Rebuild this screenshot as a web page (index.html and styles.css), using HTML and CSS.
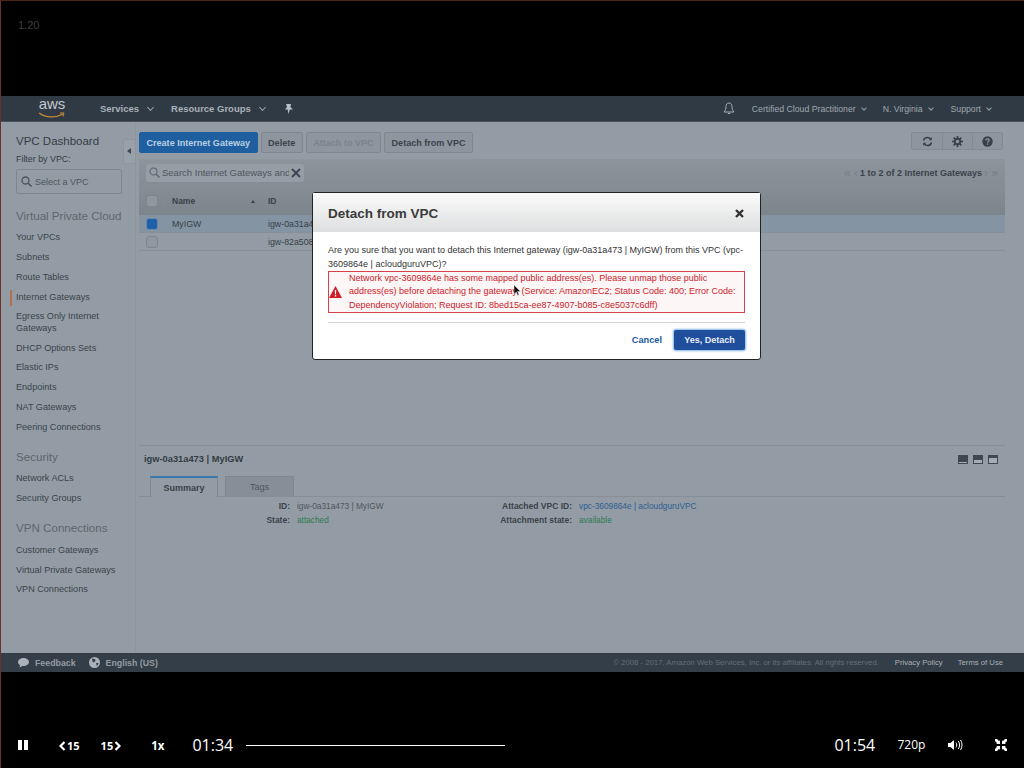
FILE: index.html
```html
<!DOCTYPE html>
<html lang="en">
<head>
    <meta charset="UTF-8">
    <meta name="viewport" content="width=device-width, initial-scale=1.0">
    <title>Detach from VPC</title>
    <link rel="stylesheet" href="styles.css">
</head>
<body>
<div class="screen">
    <div class="video-top"><span class="speed-note">1.20</span></div>

    <header class="nav">
        <div class="logo">
            <span class="logo-text">aws</span>
            <svg class="logo-smile" width="28" height="7" viewBox="0 0 28 7"><path d="M1 1c7 5 17 5 24 1" fill="none" stroke="#c98a3c" stroke-width="1.3"/><path d="M22 1l4 0-1 3.5" fill="none" stroke="#c98a3c" stroke-width="1"/></svg>
        </div>
        <span class="nav-main nav-services">Services</span><span class="caret"></span>
        <span class="nav-main nav-groups">Resource Groups</span><span class="caret"></span>
        <svg class="nav-pin" width="10" height="10" viewBox="0 0 10 10"><path d="M2 0h5l-.6 3L9 5.500H5.800L4.500 10 3.600 5.500H1l2-2.500z" fill="#b8bfc6"/></svg>
        <div class="nav-right">
            <svg class="nav-bell" width="12" height="13" viewBox="0 0 12 13"><path d="M6 1C3.800 1 3 2.800 3 4.500 3 7 2.400 8.500 1 10h10C9.600 8.500 9 7 9 4.500 9 2.800 8.200 1 6 1zM4.800 11.500h2.400" fill="none" stroke="#a9b0b7" stroke-width="1"/></svg>
            <span class="nav-sub nav-account">Certified Cloud Practitioner</span><span class="caret small"></span>
            <span class="nav-sub nav-region">N. Virginia</span><span class="caret small"></span>
            <span class="nav-sub nav-support">Support</span><span class="caret small"></span>
        </div>
    </header>

    <div class="console">
        <aside class="sidebar">
            <h2 class="side-title">VPC Dashboard</h2>
            <div class="filter-label">Filter by VPC:</div>
            <div class="filter-box">
                <svg width="11" height="11" viewBox="0 0 11 11"><circle cx="4.500" cy="4.500" r="3.500" fill="none" stroke="#4d565e" stroke-width="1.300"/><path d="M7 7l3.500 3.500" stroke="#4d565e" stroke-width="1.600"/></svg>
                <span>Select a VPC</span>
            </div>
            <h3 class="side-group first">Virtual Private Cloud</h3>
            <a class="side-link">Your VPCs</a>
            <a class="side-link">Subnets</a>
            <a class="side-link">Route Tables</a>
            <a class="side-link active">Internet Gateways</a>
            <a class="side-link">Egress Only Internet Gateways</a>
            <a class="side-link">DHCP Options Sets</a>
            <a class="side-link">Elastic IPs</a>
            <a class="side-link">Endpoints</a>
            <a class="side-link">NAT Gateways</a>
            <a class="side-link">Peering Connections</a>
            <h3 class="side-group">Security</h3>
            <a class="side-link">Network ACLs</a>
            <a class="side-link">Security Groups</a>
            <h3 class="side-group">VPN Connections</h3>
            <a class="side-link">Customer Gateways</a>
            <a class="side-link">Virtual Private Gateways</a>
            <a class="side-link">VPN Connections</a>
        </aside>

        <div class="collapse-col"><div class="collapse-tab"></div></div>

        <main class="main">
            <div class="toolbar">
                <button class="btn primary">Create Internet Gateway</button>
                <button class="btn">Delete</button>
                <button class="btn disabled">Attach to VPC</button>
                <button class="btn">Detach from VPC</button>
                <div class="tool-icons">
                    <span class="tool-icon"><svg width="11" height="11" viewBox="0 0 11 11"><path d="M1.500 4.500C2 2.500 3.500 1.500 5.500 1.500c1.300 0 2.300.6 3 1.500M9.500 6.500C9 8.500 7.500 9.500 5.500 9.500c-1.300 0-2.300-.6-3-1.500" fill="none" stroke="#38414a" stroke-width="1.600"/><path d="M9.800 1v3.200H6.800zM1.200 10V6.800h3z" fill="#38414a"/></svg></span>
                    <span class="tool-icon"><svg width="11" height="11" viewBox="0 0 11 11"><circle cx="5.500" cy="5.500" r="2.800" fill="none" stroke="#38414a" stroke-width="2"/><path d="M5.500 0v2M5.500 9v2M0 5.500h2M9 5.500h2M1.600 1.600l1.400 1.400M8 8l1.400 1.400M1.600 9.400L3 8M8 3l1.400-1.400" stroke="#38414a" stroke-width="1.700"/></svg></span>
                    <span class="tool-icon"><svg width="11" height="11" viewBox="0 0 11 11"><circle cx="5.500" cy="5.500" r="5.200" fill="#38414a"/><path d="M3.800 4.300c0-1 .8-1.500 1.700-1.500s1.700.5 1.700 1.400c0 1.200-1.700 1.200-1.700 2.300" fill="none" stroke="#939ca4" stroke-width="1.200"/><rect x="4.900" y="7.400" width="1.200" height="1.200" fill="#939ca4"/></svg></span>
                </div>
            </div>

            <div class="search-band">
                <div class="search-box">
                    <svg width="11" height="11" viewBox="0 0 11 11"><circle cx="4.500" cy="4.500" r="3.500" fill="none" stroke="#5d666e" stroke-width="1.100"/><path d="M7 7l3.500 3.500" stroke="#5d666e" stroke-width="1.400"/></svg>
                    <span class="search-text">Search Internet Gateways and</span>
                    <svg width="10" height="10" viewBox="0 0 10 10"><path d="M1 1l8 8M9 1l-8 8" stroke="#3c454d" stroke-width="1.800"/></svg>
                </div>
                <div class="pager"><span class="pager-arrow">«&nbsp;‹</span><b>1 to 2 of 2 Internet Gateways</b><span class="pager-arrow">›&nbsp;»</span></div>
            </div>

            <div class="table-head">
                <span class="check-cell"><i class="check"></i></span>
                <span class="col-name">Name<i class="sort"></i></span>
                <span class="col-id">ID</span>
            </div>
            <div class="table-row selected">
                <span class="check-cell"><i class="check on"></i></span>
                <span class="col-name plain">MyIGW</span>
                <span class="col-id plain">igw-0a31a473</span>
            </div>
            <div class="table-row">
                <span class="check-cell"><i class="check"></i></span>
                <span class="col-name plain"></span>
                <span class="col-id plain">igw-82a50812</span>
            </div>

            <section class="details">
                <div class="details-head">
                    <b>igw-0a31a473 | MyIGW</b>
                    <div class="pane-icons"><i class="pane p1"></i><i class="pane p2"></i><i class="pane p3"></i></div>
                </div>
                <div class="tabs">
                    <span class="tab current">Summary</span>
                    <span class="tab">Tags</span>
                </div>
                <div class="summary">
                    <div class="summary-col first">
                        <div class="pair"><b>ID:</b><span>igw-0a31a473 | MyIGW</span></div>
                        <div class="pair"><b>State:</b><span class="green">attached</span></div>
                    </div>
                    <div class="summary-col second">
                        <div class="pair"><b>Attached VPC ID:</b><span class="blue">vpc-3609864e | acloudguruVPC</span></div>
                        <div class="pair"><b>Attachment state:</b><span class="green">available</span></div>
                    </div>
                </div>
            </section>
        </main>
    </div>

    <footer class="footer">
        <svg width="11" height="10" viewBox="0 0 11 10"><path d="M5.500 0C2.500 0 0 1.700 0 4c0 1.300.8 2.400 2 3.100L1.600 9.500 4.400 7.900c.4 0 .7.100 1.100.1 3 0 5.500-1.800 5.500-4S8.500 0 5.500 0z" fill="#aab1b8"/></svg>
        <span class="foot-strong feedback">Feedback</span>
        <svg class="globe" width="11" height="11" viewBox="0 0 11 11"><circle cx="5.500" cy="5.500" r="5.500" fill="#aab1b8"/><path d="M3 1.500l3 .5 .5 2-2 1.500-1-1zM7 6l2.500 0L8 9.500z" fill="#333e49"/></svg>
        <span class="foot-strong">English (US)</span>
        <span class="copyright">© 2008 - 2017, Amazon Web Services, Inc. or its affiliates. All rights reserved.</span>
        <span class="foot-link privacy">Privacy Policy</span>
        <span class="foot-link terms">Terms of Use</span>
    </footer>

    <div class="player">
        <svg class="pause" width="10" height="10" viewBox="0 0 10 10"><path d="M0 0h4v10H0zM6 0h4v10H6z" fill="#fff"/></svg>
        <span class="skip back"><svg width="7" height="10" viewBox="0 0 7 10"><path d="M5.500 1L1.500 5l4 4" fill="none" stroke="#fff" stroke-width="2.200"/></svg>15</span>
        <span class="skip fwd">15<svg width="7" height="10" viewBox="0 0 7 10"><path d="M1.500 1l4 4-4 4" fill="none" stroke="#fff" stroke-width="2.200"/></svg></span>
        <span class="rate">1x</span>
        <span class="time">01:34</span>
        <div class="progress"></div>
        <span class="time end">01:54</span>
        <span class="quality">720p</span>
        <svg class="volume" width="15" height="12" viewBox="0 0 15 12"><path d="M0 4h2.500L6 1v10L2.500 8H0z" fill="#fff"/><path d="M8 3.500c1 1.400 1 3.600 0 5M10.300 2c1.700 2.300 1.700 5.700 0 8M12.500 1c2 2.800 2 7.200 0 10" fill="none" stroke="#fff" stroke-width="1"/></svg>
        <svg class="shrink" width="12" height="12" viewBox="0 0 12 12"><path d="M0 0l2 0 2.200 2.200L5 1v4H1l1.200-.8L0 2zM12 0l-2 0-2.200 2.200L7 1v4h4l-1.200-.8L12 2zM0 12l2 0 2.200-2.200L5 11V7H1l1.200.8L0 10zM12 12l-2 0-2.200-2.200L7 11V7h4l-1.200.8L12 10z" fill="#fff"/></svg>
    </div>

    <!-- dialog sits over the dimmed console -->
    <div class="modal">
        <div class="modal-head">
            <h1>Detach from VPC</h1>
            <svg width="9" height="9" viewBox="0 0 9 9"><path d="M1 1l7 7M8 1L1 8" stroke="#333" stroke-width="2.400"/></svg>
        </div>
        <div class="modal-body">
            <p class="question">Are you sure that you want to detach this Internet gateway (igw-0a31a473 | MyIGW) from this VPC (vpc-3609864e | acloudguruVPC)?</p>
            <div class="error-box">
                <svg width="13" height="12" viewBox="0 0 13 12"><path d="M6.500 0L13 12H0z" fill="#cc1f26"/><path d="M5.800 4h1.400l-.2 4.200H6zM5.800 9h1.400v1.400H5.800z" fill="#fff"/></svg>
                <div class="error-text">Network vpc-3609864e has some mapped public address(es). Please unmap those public address(es) before detaching the gateway. (Service: AmazonEC2; Status Code: 400; Error Code: DependencyViolation; Request ID: 8bed15ca-ee87-4907-b085-c8e5037c6dff)</div>
            </div>
            <div class="modal-actions">
                <span class="cancel">Cancel</span>
                <button class="yes">Yes, Detach</button>
            </div>
        </div>
        <svg class="cursor" width="7" height="11" viewBox="0 0 7 11"><path d="M0 0l6.500 6.500H3.600L5 10l-1.300.6L2.300 7 0 9z" fill="#111" stroke="#fff" stroke-width=".4"/></svg>
    </div>
</div>
</body>
</html>
```

FILE: styles.css
```css
* {
    box-sizing: border-box;
}

body {
    margin: 0;
    background: #000;
    font-family: "Liberation Sans", Arial, sans-serif;
}

.screen {
    position: relative;
    width: 1024px;
    height: 768px;
    overflow: hidden;
    display: flex;
    flex-direction: column;
    background: #000;
    border-left: 1px solid #6b3325;
    border-top: 1px solid #4a2319;
}

.video-top {
    height: 95px;
    padding: 14px 0 0 17px;
}

.speed-note {
    color: #3f3f3f;
    font-size: 11px;
}

/* top nav */
.nav {
    height: 26px;
    margin-left: -1px;
    display: flex;
    align-items: center;
    background: #2f3a45;
    border-bottom: 1px solid #48535d;
}

.logo {
    width: 28px;
    margin-left: 38px;
    position: relative;
    height: 24px;
}

.logo-text {
    display: block;
    text-align: center;
    color: #c5c9cd;
    font-size: 15px;
    line-height: 18px;
    margin-top: -2px;
}

.logo-smile {
    position: absolute;
    left: 0;
    top: 15px;
}

.nav-main {
    color: #aab1b8;
    font-size: 9.500px;
    font-weight: bold;
}

.nav-services {
    margin-left: 34px;
}

.nav-groups {
    margin-left: 18px;
}

.caret {
    width: 5px;
    height: 5px;
    margin: -2px 0 0 9px;
    border-right: 1px solid #98a0a8;
    border-bottom: 1px solid #98a0a8;
    transform: rotate(45deg);
}

.caret.small {
    width: 4px;
    height: 4px;
    margin-left: 6px;
}

.nav-pin {
    margin-left: 19px;
}

.nav-right {
    margin-left: auto;
    display: flex;
    align-items: center;
    padding-right: 33px;
}

.nav-sub {
    color: #a0a7ae;
    font-size: 8.700px;
}

.nav-account {
    margin-left: 17px;
}

.nav-region {
    margin-left: 17px;
}

.nav-support {
    margin-left: 18px;
}

/* console body */
.console {
    height: 531px;
    margin-left: -1px;
    display: flex;
    background: #939ca4;
    border-left: 1px solid #a5705f;
}

.sidebar {
    width: 122px;
    padding: 12px 0 0 15px;
    flex-shrink: 0;
}

.side-title {
    margin: 0;
    color: #333c44;
    font-size: 11.500px;
    font-weight: normal;
    line-height: 15px;
}

.filter-label {
    margin-top: 5px;
    color: #333c44;
    font-size: 8.900px;
    line-height: 11px;
}

.filter-box {
    width: 106px;
    height: 25px;
    margin-top: 4px;
    padding-left: 4px;
    display: flex;
    align-items: center;
    gap: 3px;
    color: #4d565e;
    font-size: 9px;
    border: 1px solid #7d868e;
    border-radius: 2px;
}

.side-group {
    margin: 16.500px 0 9.500px;
    color: #5d666e;
    font-size: 11.600px;
    font-weight: normal;
    line-height: 14px;
    white-space: nowrap;
}

.side-group.first {
    margin-top: 15px;
    margin-bottom: 9px;
}

.side-link {
    display: block;
    position: relative;
    width: 104px;
    margin-bottom: 8.450px;
    color: #3a434b;
    font-size: 9.100px;
    line-height: 11.400px;
}

.side-link.active::before {
    content: "";
    position: absolute;
    left: -6px;
    top: -2px;
    width: 2px;
    height: 16px;
    background: #b0714f;
}

.collapse-col {
    width: 13px;
    flex-shrink: 0;
    border-right: 1px solid #8d969e;
    padding-top: 17px;
}

.collapse-tab {
    width: 12px;
    height: 25px;
    background: #98a1a9;
    border: 1px solid #8d969e;
    border-right: none;
    border-radius: 2px 0 0 2px;
    position: relative;
}

.collapse-tab::after {
    content: "";
    position: absolute;
    left: 3px;
    top: 8px;
    border: 3.500px solid transparent;
    border-left: none;
    border-right: 4px solid #3e474f;
}

.main {
    width: 866px;
    margin-left: 3px;
    display: flex;
    flex-direction: column;
    padding-top: 10px;
}

.toolbar {
    height: 27px;
    display: flex;
    align-items: flex-start;
    gap: 3px;
}

.btn {
    height: 21px;
    padding: 0 6.500px;
    font-family: inherit;
    font-size: 9.050px;
    font-weight: bold;
    color: #3a434b;
    background: #8d969e;
    border: 1px solid #7f8890;
    border-radius: 2px;
}

.btn.primary {
    color: #b9cfe3;
    background: #1f5f9f;
    border-color: #1f5f9f;
}

.btn.disabled {
    color: #7a838b;
}

.tool-icons {
    margin-left: auto;
    margin-right: 2px;
    height: 18px;
    display: flex;
    border: 1px solid #828b93;
    border-radius: 2px;
    background: #8d969e;
}

.tool-icon {
    width: 30px;
    display: flex;
    align-items: center;
    justify-content: center;
    border-left: 1px solid #828b93;
}

.tool-icon:first-child {
    border-left: none;
}

.search-band {
    height: 27px;
    display: flex;
    align-items: center;
    justify-content: space-between;
    padding: 0 7px;
    background: linear-gradient(#8c949c, #848c94);
}

.search-box {
    width: 158px;
    height: 18px;
    padding: 0 3px;
    display: flex;
    align-items: center;
    gap: 2px;
    background: #959ea6;
    border-radius: 3px;
}

.search-text {
    flex: 1;
    overflow: hidden;
    white-space: nowrap;
    color: #4d565e;
    font-size: 9.500px;
}

.pager {
    color: #3a434b;
    font-size: 9px;
    line-height: 12px;
    display: flex;
    gap: 2px;
}

.pager-arrow {
    color: #787f87;
    font-size: 12px;
}

.table-head {
    height: 29px;
    display: flex;
    align-items: center;
    font-size: 8.500px;
    font-weight: bold;
    color: #38414a;
    background: linear-gradient(#858d95, #7c848c);
}

.table-row {
    height: 18px;
    display: flex;
    align-items: center;
    border-bottom: 1px solid #878f97;
    font-size: 8.800px;
    color: #38414a;
}

.table-row.selected {
    background: #8494a3;
}

.check-cell {
    width: 33px;
    padding-left: 7px;
}

.table-head .check-cell {
    height: 17px;
    border-right: 1px solid #838b93;
    width: 26px;
    margin-right: 7px;
    display: flex;
    align-items: center;
}

.check {
    display: block;
    width: 12px;
    height: 12px;
    background: #8f98a0;
    border: 1px solid #7d868e;
    border-radius: 3px;
}

.check.on {
    background: #1d62a8;
    border-color: #6d8aa6;
}

.col-name {
    width: 96px;
    position: relative;
}

.col-name.plain,
.col-id.plain {
    font-weight: normal;
}

.sort {
    position: absolute;
    right: 13px;
    top: 4px;
    border: 2.500px solid transparent;
    border-top: none;
    border-bottom: 3px solid #38414a;
}

.details {
    margin-top: 194px;
    border-top: 1px solid #868f97;
}

.details-head {
    height: 30px;
    padding: 0 7px 4px 5px;
    display: flex;
    align-items: center;
    justify-content: space-between;
    color: #333c44;
    font-size: 9.300px;
}

.pane-icons {
    display: flex;
    gap: 5px;
}

.pane {
    display: block;
    width: 10px;
    height: 9px;
    background: #3e4851;
    border: 1px solid #3e4851;
    position: relative;
}

.pane::after {
    content: "";
    position: absolute;
    left: 0;
    right: 0;
    bottom: 0;
    background: #a5adb4;
}

.p1::after {
    height: 1px;
}

.p2::after {
    height: 3px;
}

.p3::after {
    height: 5px;
}

.tabs {
    height: 21px;
    padding-left: 11px;
    display: flex;
    align-items: flex-end;
    gap: 7px;
    border-bottom: 1px solid #868f97;
}

.tab {
    width: 69px;
    height: 20px;
    display: flex;
    align-items: center;
    justify-content: center;
    font-size: 9px;
    color: #4d565e;
    background: #868f97;
    border: 1px solid #7f8890;
    border-bottom: none;
}

.tab.current {
    width: 68px;
    height: 21px;
    margin-bottom: -1px;
    font-weight: bold;
    color: #38414a;
    background: #939ca4;
    border-top: 2px solid #3a77ad;
}

.summary {
    display: flex;
    padding-top: 4px;
}

.summary-col {
    display: flex;
    flex-direction: column;
    gap: 3px;
}

.summary-col.first {
    width: 359px;
}

.pair {
    display: flex;
    gap: 7px;
    font-size: 8.300px;
    line-height: 11px;
    color: #4d565e;
}

.pair b {
    width: 151px;
    text-align: right;
    color: #3a434b;
    font-size: 8.500px;
}

.second .pair b {
    width: 74px;
    white-space: nowrap;
    display: flex;
    justify-content: flex-end;
}

.green {
    color: #2d7a52;
}

.blue {
    color: #2c5c92;
}

/* bottom console bar */
.footer {
    height: 19px;
    margin-left: -1px;
    padding: 0 21px 0 18px;
    display: flex;
    align-items: center;
    background: #333e49;
    font-size: 8.800px;
}

.foot-strong {
    color: #949ba2;
    font-weight: bold;
}

.feedback {
    margin: 0 13px 0 6px;
}

.globe {
    margin-right: 6px;
}

.copyright {
    margin-left: auto;
    color: #656e77;
    font-size: 7.750px;
}

.foot-link {
    color: #aab1b8;
    font-size: 7.700px;
}

.privacy {
    margin-left: 16px;
}

.terms {
    margin-left: 15px;
}

/* video controls */
.player {
    flex: 1;
    padding-top: 47px;
    display: flex;
    align-items: flex-start;
    color: #fff;
}

.pause {
    margin: 21px 0 0 17px;
}

.skip {
    display: flex;
    align-items: center;
    gap: 1px;
    margin-top: 21px;
    font-size: 11px;
    font-weight: bold;
    font-family: "Open Sans", sans-serif;
    line-height: 12px;
}

.skip.back {
    margin-left: 31px;
}

.skip.fwd {
    margin-left: 21px;
}

.rate {
    margin: 20px 0 0 30px;
    font-size: 11.500px;
    font-weight: bold;
    font-family: "Open Sans", sans-serif;
    line-height: 14px;
}

.time {
    width: 40px;
    margin: 15px 0 0 28px;
    font-size: 16px;
    line-height: 22px;
    font-family: "Open Sans", sans-serif;
}

.time.end {
    margin-left: 329px;
}

.progress {
    width: 259px;
    height: 1px;
    margin: 26px 0 0 14px;
    background: #fff;
}

.quality {
    margin: 17px 0 0 23px;
    font-size: 12px;
    line-height: 18px;
    font-family: "Open Sans", sans-serif;
}

.volume {
    margin: 20px 0 0 23px;
}

.shrink {
    margin: 20px 0 0 32px;
}

/* dialog */
.modal {
    position: absolute;
    left: 311px;
    top: 191px;
    width: 449px;
    height: 168px;
    background: #fff;
    border: 1px solid #222;
    border-radius: 3px;
}

.modal-head {
    height: 39px;
    padding: 1px 16px 0 15px;
    display: flex;
    align-items: center;
    justify-content: space-between;
    background: linear-gradient(#fafafa, #dedfe0);
}

.modal-head h1 {
    margin: 0;
    color: #3b3b3b;
    font-size: 13.500px;
    font-weight: bold;
}

.modal-body {
    padding: 0 15px;
}

.question {
    margin: 12px 0 0;
    color: #333;
    font-size: 9px;
    line-height: 13.500px;
}

.error-box {
    height: 42px;
    padding-left: 0;
    display: flex;
    align-items: center;
    gap: 7px;
    border: 1px solid #d8404a;
    background: #fdf6f6;
}

.error-text {
    flex: 1;
    color: #cc2029;
    font-size: 9px;
    line-height: 13.300px;
}

.modal-actions {
    height: 28px;
    margin-top: 9px;
    display: flex;
    align-items: center;
    justify-content: flex-end;
    gap: 12px;
    border-top: 1px solid #d5d5d5;
    padding-top: 7px;
}

.cancel {
    color: #1b5aa0;
    font-size: 9.200px;
    font-weight: bold;
}

.yes {
    width: 71px;
    height: 20px;
    padding: 0;
    font-family: inherit;
    font-size: 9px;
    font-weight: bold;
    color: #e6edf5;
    background: #1f4f9c;
    border: none;
    border-radius: 2px;
    box-shadow: 0 0 2px 1px #7db4e6;
}

.cursor {
    position: absolute;
    left: 201px;
    top: 92px;
}
```
